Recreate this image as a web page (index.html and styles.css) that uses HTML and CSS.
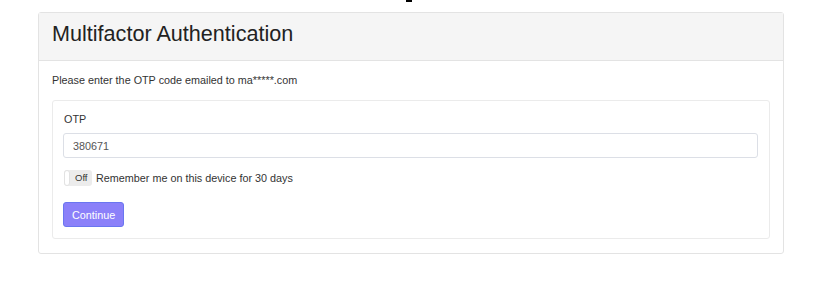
FILE: index.html
```html
<!DOCTYPE html>
<html lang="en">
<head>
  <meta charset="UTF-8" />
  <title>Multifactor Authentication</title>
  <link rel="stylesheet" href="styles.css">
</head>
<body>
  <div class="caret"></div>

  <div class="panel">
    <div class="panel-heading">
      <h3>Multifactor Authentication</h3>
    </div>
    <div class="panel-body">
      <p class="intro">Please enter the OTP code emailed to ma*****.com</p>

      <form class="well">
        <label for="otp">OTP</label>
        <input id="otp" type="text" value="380671">

        <div class="remember">
          <span class="toggle"><span class="knob"></span>Off</span>
          Remember me on this device for 30 days
        </div>

        <button type="button" class="btn">Continue</button>
      </form>
    </div>
  </div>
</body>
</html>
```

FILE: styles.css
```css
body {
  font-family: "Liberation Sans", Arial, sans-serif;
  font-size: 10.8px;
  line-height: 14px;
  color: #333;
  margin: 0;
  padding: 0 40px 0 38px;
  background: #fff;
}
.caret {
  width: 6px;
  height: 2px;
  margin-left: 368px;
  background: #000;
}
.panel {
  margin-top: 10px;
  width: 746px;
  border: 1px solid #e3e3e3;
  border-radius: 3px;
  box-sizing: border-box;
}
.panel-heading {
  background: #f5f5f5;
  border-bottom: 1px solid #e3e3e3;
  padding: 8px 13px 11px;
  height: 48px;
  box-sizing: border-box;
}
h3 {
  margin: 0;
  font-size: 21.6px;
  font-weight: normal;
  color: #222;
  line-height: 26px;
}
.panel-body {
  padding: 12px 13px 14px;
}
.intro {
  margin: 0 0 13px;
}
.well {
  border: 1px solid #ebebeb;
  border-radius: 3px;
  padding: 11px 11px 11px 10px;
}
label {
  display: block;
  margin-bottom: 7px;
  padding-left: 1px;
}
input {
  display: block;
  width: 100%;
  box-sizing: border-box;
  height: 25px;
  border: 1px solid #dcdfe6;
  border-radius: 3px;
  padding: 0 9px;
  font: inherit;
  color: #555;
}
.remember {
  display: flex;
  align-items: center;
  gap: 4px;
  height: 16px;
  margin-top: 12px;
  padding-left: 1px;
}
.toggle {
  display: inline-flex;
  align-items: center;
  width: 28px;
  height: 16px;
  background: #ececec;
  border-radius: 3px;
  font-size: 9.5px;
  color: #333;
  box-sizing: border-box;
  gap: 5px;
}
.knob {
  width: 6px;
  height: 16px;
  background: #fff;
  border: 1px solid #e2e2e2;
  border-radius: 3px;
  box-sizing: border-box;
}
.btn {
  display: block;
  margin-top: 16px;
  height: 25px;
  padding: 0 8px;
  background: #8b80f9;
  border: 1px solid #6a76f0;
  border-radius: 3px;
  color: #fff;
  font: inherit;
}
```
